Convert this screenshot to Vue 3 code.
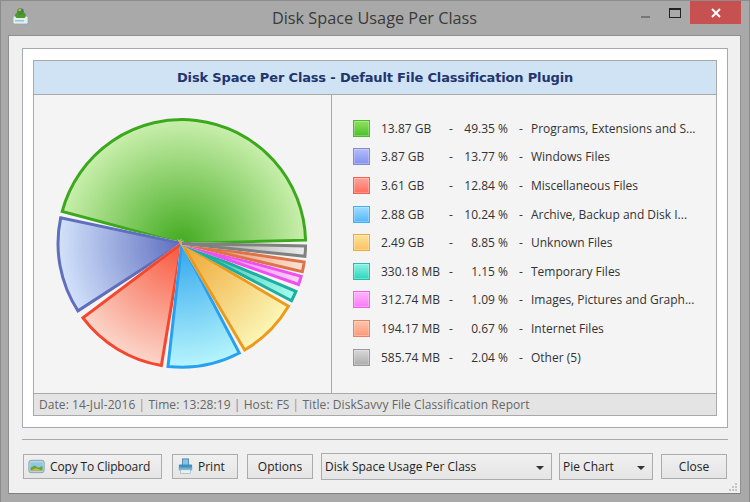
<script setup>
// Pie geometry: angles in degrees, clockwise from 3 o'clock
const cx = 181.8
const cy = 243.4
const radius = 123.8

const classes = [
  { size: '13.87 GB', pct: '49.35 %', name: 'Programs, Extensions and S...', from: 195, to: 358.5, stroke: '#3ca81e', inner: '#43ab20', outer: '#c9efac', swatch: ['#92e05e', '#4ac02a'], border: '#4fb82e' },
  { size: '3.87 GB', pct: '13.77 %', name: 'Windows Files', from: 147, to: 192, stroke: '#5f6fbc', inner: '#5d6dbf', outer: '#d2e2fb', swatch: ['#b2bdfa', '#8592ee'], border: '#7f8cd6' },
  { size: '3.61 GB', pct: '12.84 %', name: 'Miscellaneous Files', from: 99.5, to: 143, stroke: '#f5462e', inner: '#f9553b', outer: '#fbd6ca', swatch: ['#ffa49a', '#ff6e60'], border: '#f8604c' },
  { size: '2.88 GB', pct: '10.24 %', name: 'Archive, Backup and Disk I...', from: 62.3, to: 96.4, stroke: '#28a0ef', inner: '#2fa5ee', outer: '#b6f5fc', swatch: ['#9fdcff', '#52b8fb'], border: '#3fb0f2' },
  { size: '2.49 GB', pct: '8.85 %', name: 'Unknown Files', from: 30.5, to: 59.5, stroke: '#ea9b1e', inner: '#eea32f', outer: '#fbf6b6', swatch: ['#fde3a0', '#fbc25c'], border: '#f0aa3a' },
  { size: '330.18 MB', pct: '1.15 %', name: 'Temporary Files', from: 22.8, to: 27.6, stroke: '#1fae9d', inner: '#2cb5a4', outer: '#a4fcef', swatch: ['#8df3e2', '#2bd5bf'], border: '#2bbba9' },
  { size: '312.74 MB', pct: '1.09 %', name: 'Images, Pictures and Graph...', from: 15.4, to: 19.4, stroke: '#ee4ff0', inner: '#ee55ee', outer: '#fbd2fa', swatch: ['#fdb4fb', '#fb7cf6'], border: '#f060ee' },
  { size: '194.17 MB', pct: '0.67 %', name: 'Internet Files', from: 8.7, to: 13.2, stroke: '#dd7347', inner: '#dd7a50', outer: '#fde2d5', swatch: ['#fdc4ab', '#fa9a78'], border: '#e5835c' },
  { size: '585.74 MB', pct: '2.04 %', name: 'Other (5)', from: 1.2, to: 6, stroke: '#808080', inner: '#8a8a8a', outer: '#ececec', swatch: ['#d8d8d8', '#acacac'], border: '#999999' }
]

const point = (deg) => {
  const a = (deg * Math.PI) / 180
  return `${(cx + radius * Math.cos(a)).toFixed(2)} ${(cy + radius * Math.sin(a)).toFixed(2)}`
}

const slicePath = (s) => `M${cx} ${cy} L${point(s.from)} A${radius} ${radius} 0 0 1 ${point(s.to)} Z`

const swatchStyle = (s) => ({
  background: `linear-gradient(${s.swatch[0]}, ${s.swatch[1]})`,
  borderColor: s.border
})
</script>

<template>
  <div class="window">
    <div class="titlebar">
      <div class="title-left">
        <svg class="app-icon" width="17" height="18" viewBox="0 0 17 18">
          <rect x="1" y="9" width="15" height="8" rx="1.5" fill="#e3eef0" stroke="#8fa6ac" stroke-width="0.8" />
          <rect x="3" y="13" width="9" height="1.5" fill="#9ec3cc" />
          <path d="M3 9 C3 3 14 3 14 9 L12.5 11 L4.5 11 Z" fill="#4f9a2c" />
          <circle cx="8.5" cy="4.6" r="3.4" fill="#3e8f34" />
          <path d="M6 3.6 A3 3 0 0 1 9.5 2 L8.5 4.6 Z" fill="#e3b52e" />
          <path d="M9.5 2 A3 3 0 0 1 11.4 4.4 L8.5 4.6 Z" fill="#3b6fbe" />
        </svg>
      </div>
      <div class="title-text">Disk Space Usage Per Class</div>
      <div class="controls">
        <div class="ctl ctl-min"><span></span></div>
        <div class="ctl ctl-max"><span></span></div>
        <div class="ctl-close">
          <svg width="10" height="10" viewBox="0 0 10 10">
            <path d="M1 1 L9 9 M9 1 L1 9" stroke="#fff" stroke-width="2" />
          </svg>
        </div>
      </div>
    </div>

    <div class="client">
      <div class="paper">
        <div class="report">
          <div class="report-head">Disk Space Per Class - Default File Classification Plugin</div>
          <div class="report-body">
            <div class="chart">
              <svg class="pie" width="297" height="297" viewBox="34 95 297 297">
                <defs>
                  <radialGradient
                    v-for="(s, i) in classes"
                    :id="'slice' + i"
                    :key="i"
                    gradientUnits="userSpaceOnUse"
                    :cx="cx"
                    :cy="cy"
                    :r="radius"
                  >
                    <stop offset="0" :stop-color="s.inner" />
                    <stop offset="1" :stop-color="s.outer" />
                  </radialGradient>
                </defs>
                <path
                  v-for="(s, i) in classes"
                  :key="i"
                  class="slice"
                  :d="slicePath(s)"
                  :fill="`url(#slice${i})`"
                  :stroke="s.stroke"
                  stroke-width="3"
                  stroke-linejoin="miter"
                />
              </svg>
            </div>
            <div class="legend">
              <div v-for="s in classes" :key="s.name" class="row">
                <span class="swatch" :style="swatchStyle(s)"></span>
                <span class="size">{{ s.size }}</span>
                <span>-</span>
                <span class="pct">{{ s.pct }}</span>
                <span class="dash2">-</span>
                <span>{{ s.name }}</span>
              </div>
            </div>
          </div>
          <div class="report-foot">
            Date: 14-Jul-2016 <i>|</i> Time: 13:28:19 <i class="blue">|</i> Host: FS <i>|</i> Title: DiskSavvy File Classification Report
          </div>
        </div>
      </div>

      <div class="separator"></div>

      <div class="actions">
        <button class="btn btn-copy">
          <svg width="17" height="15" viewBox="0 0 20 17" preserveAspectRatio="none">
            <rect x="1" y="1.5" width="18" height="14" rx="2.5" fill="#b9d4dc" stroke="#7fa0ac" />
            <rect x="3" y="4" width="14" height="9" fill="#8fc8e6" />
            <path d="M3 13 L3 9.5 L8 7.5 L12 10 L17 8 L17 13 Z" fill="#6aa336" />
            <path d="M3 13 L9 10.5 L17 13 Z" fill="#d9b33c" />
          </svg>
          Copy To Clipboard
        </button>
        <button class="btn btn-print">
          <svg width="15" height="17" viewBox="0 0 17 18" preserveAspectRatio="none">
            <rect x="5" y="1" width="7" height="7" fill="#8cc2de" stroke="#4a8bb0" />
            <rect x="1" y="7" width="15" height="6" rx="1" fill="#3f8fc0" />
            <rect x="1" y="10" width="15" height="3" fill="#6eb0d4" />
            <rect x="3" y="12.5" width="11" height="4" fill="#e8f0f2" stroke="#9ab2bc" stroke-width="0.7" />
          </svg>
          Print
        </button>
        <button class="btn btn-options">Options</button>
        <div class="combo combo-report">
          <span>Disk Space Usage Per Class</span>
          <i class="arrow"></i>
        </div>
        <div class="combo combo-chart">
          <span>Pie Chart</span>
          <i class="arrow"></i>
        </div>
        <button class="btn btn-close">Close</button>
      </div>

      <svg class="grip" width="11" height="9" viewBox="0 0 11 9">
        <path d="M8 0h2v2H8zM5 3h2v2H5zM8 3h2v2H8zM2 6h2v2H2zM5 6h2v2H5zM8 6h2v2H8z" fill="#c4c4c4" />
      </svg>
    </div>
  </div>
</template>

<style>
html,
body {
  margin: 0;
  background: #a8a8a8;
}
</style>

<style scoped>
.window {
  box-sizing: border-box;
  width: 750px;
  height: 502px;
  padding: 0 8px 8px 7px;
  background: #a9a9a9;
  border: 1px solid #8c8c8c;
  border-bottom: 0;
  display: flex;
  flex-direction: column;
  font-family: "Open Sans", "Noto Sans", sans-serif;
  font-size: 12px;
  color: #333;
  overflow: hidden;
}

.titlebar {
  height: 34px;
  flex: none;
  display: grid;
  grid-template-columns: 1fr auto 1fr;
}

.title-left {
  padding: 6px 0 0 4px;
}

.app-icon {
  display: block;
}

.title-text {
  font-size: 16.3px;
  line-height: 35px;
  color: #3a3a3a;
}

.controls {
  justify-self: end;
  display: flex;
  align-items: flex-start;
}

.ctl {
  width: 30px;
  height: 24px;
  display: flex;
  justify-content: center;
}

.ctl-min span {
  width: 9px;
  height: 2px;
  margin-top: 15px;
  background: #777;
}

.ctl-max span {
  box-sizing: border-box;
  width: 12px;
  height: 10px;
  margin-top: 7px;
  border: 1px solid #222;
  border-top-width: 2px;
}

.ctl-close {
  width: 51px;
  height: 23px;
  background: #c75050;
  display: flex;
  align-items: center;
  justify-content: center;
}

.client {
  position: relative;
  flex: 1;
  min-height: 0;
  box-sizing: border-box;
  padding: 12px 12px 0 13px;
  background: #f0f0f0;
  border: 1px solid #8f8f8f;
  border-bottom: 1px solid #7f7f7f;
  display: flex;
  flex-direction: column;
}

.paper {
  box-sizing: border-box;
  height: 380px;
  flex: none;
  padding: 11px 10px;
  background: #fff;
  border: 1px solid #a5a8ae;
}

.report {
  box-sizing: border-box;
  height: 100%;
  border: 1px solid #a9a9a9;
  background: #f4f4f4;
  display: flex;
  flex-direction: column;
}

.report-head {
  height: 33px;
  flex: none;
  background: #cfe3f4;
  border-bottom: 1px solid #a9a9a9;
  text-align: center;
  font-family: "DejaVu Sans", sans-serif;
  font-weight: 700;
  font-size: 13px;
  letter-spacing: -0.16px;
  line-height: 33px;
  color: #24346f;
}

.report-body {
  flex: 1;
  min-height: 0;
  display: flex;
}

.chart {
  width: 297px;
  flex: none;
  border-right: 1px solid #a9a9a9;
}

.pie {
  display: block;
}

.slice {
  filter: drop-shadow(0 0 0.6px rgba(255, 255, 255, 0.9));
}

.legend {
  flex: 1;
  padding: 19px 0 0 21px;
  color: #333;
}

.row {
  height: 28.6px;
  display: grid;
  grid-template-columns: 17px 79px 11px 48px 23px auto;
  align-items: center;
  white-space: nowrap;
}

.size {
  margin-left: 11px;
}

.dash2 {
  margin-left: 11px;
}

.swatch {
  box-sizing: border-box;
  width: 17px;
  height: 17px;
  border: 1px solid;
  box-shadow: inset 0 0 0 1px rgba(255, 255, 255, 0.25);
}

.pct {
  text-align: right;
}

.report-foot {
  height: 22px;
  flex: none;
  box-sizing: border-box;
  padding-left: 5px;
  background: #e4e4e4;
  border-top: 1px solid #a9a9a9;
  line-height: 22px;
  letter-spacing: 0.07px;
  color: #666;
  white-space: nowrap;
}

.report-foot i {
  font-style: normal;
  color: #c98a3c;
}

.report-foot i.blue {
  color: #5a86b8;
}

.separator {
  height: 1px;
  flex: none;
  margin-top: 11px;
  background: #a9a9a9;
}

.actions {
  margin-top: 13px;
  display: flex;
  align-items: center;
  padding-left: 1px;
}

.btn {
  box-sizing: border-box;
  height: 25px;
  padding: 0;
  border: 1px solid #acacac;
  background: linear-gradient(#f0f0f0, #e5e5e5);
  font: inherit;
  color: #222;
  display: flex;
  align-items: center;
  justify-content: center;
}

.btn-copy {
  width: 139px;
  justify-content: flex-start;
  padding-left: 4px;
  gap: 5px;
  letter-spacing: -0.15px;
}

.btn-print {
  width: 66px;
  margin-left: 10px;
  justify-content: flex-start;
  padding-left: 5px;
  gap: 5px;
}

.btn-options {
  width: 66px;
  margin-left: 9px;
}

.combo {
  box-sizing: border-box;
  height: 27px;
  border: 1px solid #acacac;
  background: linear-gradient(#f0f0f0, #e5e5e5);
  color: #222;
  display: flex;
  align-items: center;
  justify-content: space-between;
  padding: 0 7px 0 3px;
}

.combo-report {
  width: 231px;
  margin-left: 8px;
}

.combo-chart {
  width: 94px;
  margin-left: 7px;
}

.arrow {
  width: 0;
  height: 0;
  margin-top: 3px;
  border-left: 4px solid transparent;
  border-right: 4px solid transparent;
  border-top: 4px solid #333;
}

.btn-close {
  width: 66px;
  margin-left: 8px;
}

/* resize grip sits over the corner of the dialog */
.grip {
  position: absolute;
  right: 2px;
  bottom: 1px;
}
</style>
